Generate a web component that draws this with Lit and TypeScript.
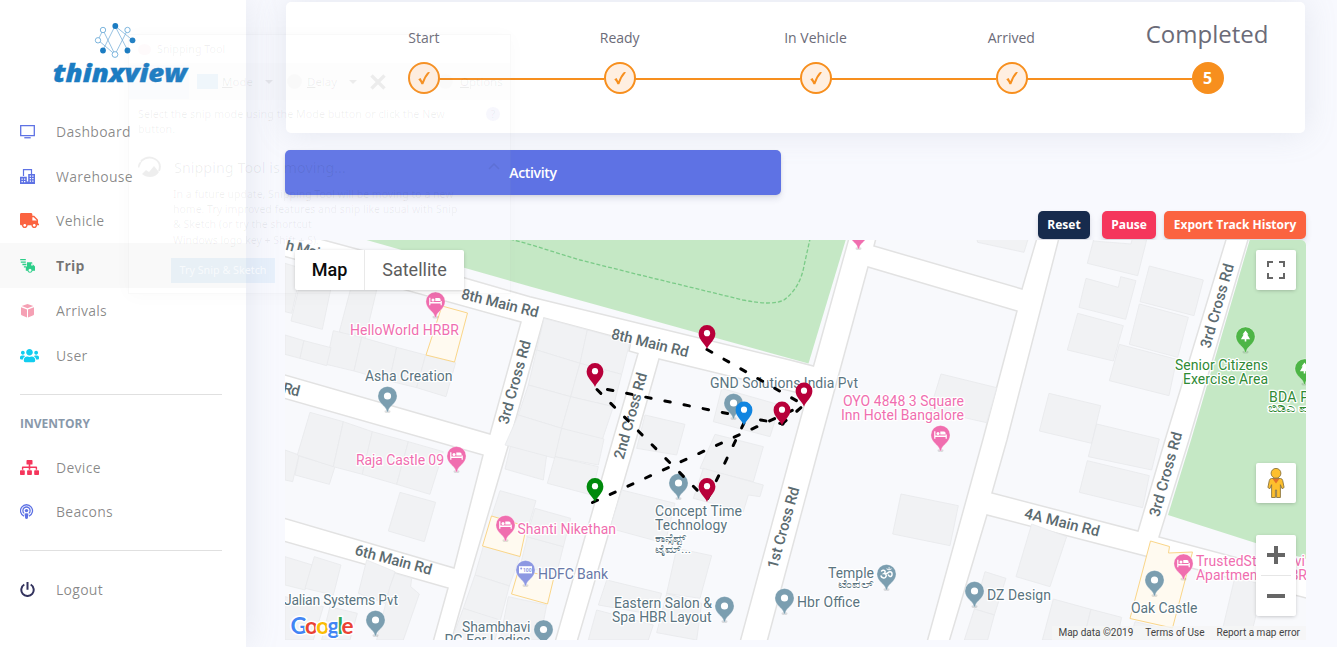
import { LitElement, html, svg, css } from "lit";
import { customElement } from "lit/decorators.js";
import { classMap } from "lit/directives/class-map.js";

const ICONS: Record<string, { w: number; color: string; body: unknown }> = {
  tv: {
    w: 15, color: "#5e72e4",
    body: svg`<path d="M.7 1.7h13.6v10H.7z" fill="none" stroke="currentColor" stroke-width="1.3"/><path d="M4.3 13.1h6.4v1.3H4.3z" fill="currentColor"/>`,
  },
  buildings: {
    w: 15, color: "#5e72e4",
    body: svg`<path d="M3.5 7V.6h8v4.600" fill="none" stroke="currentColor" stroke-width="1.2"/><path fill="currentColor" fill-rule="evenodd" d="M0 7.700h6.8V15H0zM8.200 5h6.800v10H8.200zM1.500 9.500v1.300h1.300V9.500zM4 9.500v1.300h1.300V9.500zM1.500 12v1.300h1.300V12zM4 12v1.300h1.300V12zM9.700 6.500v1.200H11V6.500zM12.200 6.500v1.200h1.300V6.500zM9.700 9v1.200H11V9zM12.200 9v1.200h1.300V9zM9.700 11.600v1.200H11v-1.200zM12.200 11.600v1.200h1.300v-1.200zM6.800 12.500h1.400V15H6.800z"/>`,
  },
  truck: {
    w: 19, color: "#fb6340",
    body: svg`<g transform="scale(.02969)"><path fill="currentColor" d="M624 352h-16V243.900c0-12.700-5.100-24.900-14.100-33.900L494 110.100c-9-9-21.200-14.100-33.900-14.100H416V48c0-26.500-21.500-48-48-48H48C21.500 0 0 21.500 0 48v320c0 26.500 21.500 48 48 48h16c0 53 43 96 96 96s96-43 96-96h128c0 53 43 96 96 96s96-43 96-96h48c8.800 0 16-7.200 16-16v-32c0-8.800-7.200-16-16-16zM160 464c-26.500 0-48-21.500-48-48s21.500-48 48-48 48 21.500 48 48-21.500 48-48 48zm320 0c-26.500 0-48-21.500-48-48s21.500-48 48-48 48 21.500 48 48-21.500 48-48 48zm80-208H416V144h44.100l99.900 99.900V256z"/></g>`,
  },
  delivery: {
    w: 15, color: "#2dce89",
    body: svg`<path d="M.2 1.700h5.600M.8 4.100h5M2.400 6.500h4M3.900 8.900h2.500" stroke="currentColor" stroke-width="1.300"/><path fill="currentColor" fill-rule="evenodd" d="M7 4.200h5.100l.6 2 2.300 2.300v4.300h-2.400a2.700 2.700 0 0 1-5.200 0H5.800V9.500L7 8zm4.400 1.400-.3 2h1.900l-.6-2zM10 10.700a1.500 1.500 0 1 0 0 3 1.500 1.500 0 0 0 0-3z"/>`,
  },
  box: {
    w: 15, color: "#f5a0b4",
    body: svg`<path fill="currentColor" d="M7.500.9 13.300 3 7.500 5.200 1.700 3zM1 4.200l6 2.200v8L1.600 12.200 1 11.500zM14 4.200 8 6.400v8l5.400-2.200.6-.7z"/>`,
  },
  users: {
    w: 19, color: "#11cdef",
    body: svg`<g transform="scale(.02969)"><path fill="currentColor" d="M96 224c35.300 0 64-28.700 64-64s-28.700-64-64-64-64 28.700-64 64 28.700 64 64 64zm448 0c35.300 0 64-28.700 64-64s-28.700-64-64-64-64 28.700-64 64 28.700 64 64 64zm32 32h-64c-17.600 0-33.500 7.100-45.100 18.600 40.300 22.100 68.900 62 75.100 109.400h66c17.700 0 32-14.300 32-32v-32c0-35.300-28.700-64-64-64zm-256 0c61.900 0 112-50.100 112-112S381.900 32 320 32 208 82.100 208 144s50.100 112 112 112zm76.800 32h-8.300c-20.800 10-43.900 16-68.500 16s-47.600-6-68.500-16h-8.300C179.600 288 128 339.600 128 403.200V432c0 26.500 21.500 48 48 48h288c26.500 0 48-21.500 48-48v-28.800c0-63.600-51.600-115.200-115.200-115.200zm-223.700-13.400C161.500 263.100 145.600 256 128 256H64c-35.300 0-64 28.700-64 64v32c0 17.700 14.300 32 32 32h65.900c6.300-47.400 34.900-87.300 75.200-109.400z"/></g>`,
  },
  sitemap: {
    w: 19, color: "#f5365c",
    body: svg`<path fill="currentColor" d="M7.200 0h4.600q.7 0 .7.700v3.200q0 .7-.7.700h-1.500v1.900h6q.8 0 .8.800v2.400h-1.400V8h-5.400v1.700H8.700V8H3.300v1.700H1.900V7.300q0-.8.800-.8h6V4.600H7.200q-.7 0-.7-.7V.7Q6.500 0 7.200 0zM.8 10.200h3.200q.8 0 .8.800v3.200q0 .8-.8.800H.8q-.8 0-.8-.8V11q0-.8.800-.8zM7.900 10.200h3.200q.8 0 .8.800v3.200q0 .8-.8.800H7.900q-.8 0-.8-.8V11q0-.8.800-.8zM15 10.200h3.200q.8 0 .8.800v3.200q0 .8-.8.800H15q-.8 0-.8-.8V11q0-.8.800-.8z"/>`,
  },
  podcast: {
    w: 15, color: "#5e72e4",
    body: svg`<g fill="none" stroke="currentColor" stroke-width="1.300"><path d="M4 12.200A6 6 0 1 1 9 12.200"/><path d="M4 9.200a3.600 3.600 0 1 1 5 0"/></g><circle cx="6.500" cy="6.600" r="1.700" fill="currentColor"/><path fill="currentColor" d="M4.600 9.600q1.900-.9 3.800 0l-.5 4.400q-.2 1-1.400 1t-1.400-1z"/>`,
  },
  power: {
    w: 15, color: "#32325d",
    body: svg`<path d="M4.300 2.500a6.200 6.200 0 1 0 6.400 0M7.500 0v7.700" fill="none" stroke="currentColor" stroke-width="2"/>`,
  },
};

@customElement("nav-item")
class NavItem extends LitElement {
  static properties = { icon: {}, label: {}, active: { type: Boolean } };
  declare icon: string;
  declare label: string;
  declare active: boolean;
  static styles = css`
    .row { display: flex; align-items: center; height: 44.800px; padding-left: 20px; font-size: 14px; letter-spacing: 0.280px; color: rgba(0, 0, 0, 0.470); }
    .active { background: rgba(0, 0, 0, 0.025); font-weight: 700; color: rgba(0, 0, 0, 0.540); }
    .icon { width: 36px; height: 15px; display: block; }
    .icon svg { display: block; height: 15px; }
  `;
  render() {
    const i = ICONS[this.icon];
    return html`<div class=${classMap({ row: true, active: this.active })}>
      <span class="icon"><svg width=${i.w} height="15" viewBox="0 0 ${i.w} 15" color=${i.color}>${i.body}</svg></span>
      <span>${this.label}</span>
    </div>`;
  }
}

@customElement("side-bar")
class SideBar extends LitElement {
  static styles = css`
    :host { display: flex; flex-direction: column; width: 246px; flex: none; height: 647px; background: #fff; box-shadow: 0 0 32px rgba(136, 152, 170, 0.180); }
    .logo { height: 109px; display: block; flex: none; }
    .rule { height: 1px; background: #e0e0e0; margin: 16px 24px 0 20px; }
    .heading { margin: 20px 0 0 20px; height: 18px; line-height: 18px; font-size: 12px; font-weight: 700; color: #8898aa; letter-spacing: 0; }
    .inventory { padding-top: 12px; }
    .account { padding-top: 16px; }
  `;
  render() {
    return html`
      <svg class="logo" width="246" height="109" viewBox="0 0 246 109">
        <g fill="none" stroke="#7db3db" stroke-width=".8">
          <path d="M115 26 103 50M115 26 127.500 50M115 26 132.500 40M103 30 98 40 115 54.500 127.500 30M103 30 115 54.500"/>
        </g>
        <g fill="#fff" stroke="#5ea3d4" stroke-width=".8">
          <circle cx="103" cy="30" r="2.700"/><circle cx="127.500" cy="30" r="2.700"/><circle cx="98" cy="40.300" r="2.700"/><circle cx="115" cy="54.500" r="2.900"/>
        </g>
        <g fill="#1b7cc2"><circle cx="115.300" cy="26" r="2.900"/><circle cx="132.500" cy="40.300" r="2.900"/><circle cx="103" cy="50.500" r="2.900"/><circle cx="127.500" cy="50.500" r="2.900"/></g>
        <text x="53" y="82" fill="#1b7cc2" stroke="#1b7cc2" stroke-width=".35" font-size="25" font-weight="800" font-style="italic" textLength="134" lengthAdjust="spacingAndGlyphs">thinxview</text>
      </svg>
      <nav>
        <nav-item icon="tv" label="Dashboard"></nav-item>
        <nav-item icon="buildings" label="Warehouse"></nav-item>
        <nav-item icon="truck" label="Vehicle"></nav-item>
        <nav-item icon="delivery" label="Trip" active></nav-item>
        <nav-item icon="box" label="Arrivals"></nav-item>
        <nav-item icon="users" label="User"></nav-item>
      </nav>
      <div class="rule"></div>
      <div class="heading">INVENTORY</div>
      <nav class="inventory">
        <nav-item icon="sitemap" label="Device"></nav-item>
        <nav-item icon="podcast" label="Beacons"></nav-item>
      </nav>
      <div class="rule"></div>
      <nav class="account"><nav-item icon="power" label="Logout"></nav-item></nav>
    `;
  }
}

@customElement("trip-steps")
class TripSteps extends LitElement {
  static styles = css`
    :host { display: grid; grid-template-columns: repeat(5, 1fr); height: 131px; margin-top: 2px; padding-left: 40px; box-sizing: border-box; background: #fff; border-radius: 5px; box-shadow: 0 0 32px rgba(136, 152, 170, 0.180); color: #6b6b78; }
    .step { display: grid; grid-template-rows: 60px 32px; grid-template-columns: 1fr 31px 1fr; align-items: center; }
    .label { grid-column: 1 / 4; text-align: center; font-size: 14px; line-height: 20px; padding-top: 12px; }
    .current .label { font-size: 24px; line-height: 30px; padding-top: 4px; white-space: nowrap; }
    .dot { display: grid; place-items: center; box-sizing: border-box; width: 32px; height: 32px; border: 2px solid #f78f1e; border-radius: 50%; background: #ffefe1; color: #f78f1e; grid-column: 2; grid-row: 2; }
    .current .dot { background: #f78f1e; color: #fff; font-weight: 700; font-size: 16px; }
    .line { grid-row: 2; height: 2px; background: #f78f1e; margin-top: 2px; }
    .before { grid-column: 1; }
    .after { grid-column: 3; }
  `;
  render() {
    const names = ["Start", "Ready", "In Vehicle", "Arrived", "Completed"];
    return names.map((n, i) => html`
      <div class=${classMap({ step: true, current: i === 4 })}>
        <span class="label">${n}</span>
        ${i > 0 ? html`<span class="line before"></span>` : ""}
        <span class="dot">${i < 4
          ? html`<svg width="14" height="14" viewBox="0 0 14 14"><path fill="currentColor" d="M1.300 8.200 3.600 7.100 5.300 10.300Q8.100 3.600 11 1l2 .2Q8.800 5.900 6.300 13.200H4.400Q3.200 10.200 1.300 8.200z"/></svg>`
          : "5"}</span>
        ${i < 4 ? html`<span class="line after"></span>` : ""}
      </div>`);
  }
}

const BLOCKS = [
  "316,238 465,278 530,296.7 790,360 813.5,366 849,238",
  "283,256 521,322 490,434 283,374.500",
  "283,398 483,455 454,568 283,518",
  "283,541 448,588 433,642 283,642",
  "544,318 631,341 629,351 638,353.500 613,439 555,642 451,642 460,610 510,440",
  "659,359 807,395 790,457 740,642 577,642 636,440",
  "868,267 1017,311 983,439 927,642 767,642 821,440",
  "876,238 874,246 1022,289 1037,238",
  "1059,238 1226.500,238 1165,440 1138,531 992,493 1007,440",
  "987,515 1145,556 1310,599 1310,642 949,642",
  "1248.500,238 1310,238 1310,577 1159,537 1189,440",
];

// Building outlines, grouped by survey tile: origin x, origin y, outlines in thirds of a pixel.
const BUILDINGS: [number, number, string[]][] = [
  [280, 235, [
    "15,85 65,100 35,235 15,230", "68,110 158,135 127,283 33,258", "215,150 290,165 252,325 178,290",
    "160,287 245,307 222,408 138,388", "245,307 350,337 328,438 222,408", "350,337 437,360 410,458 328,438",
    "437,360 527,383 498,485 410,458", "15,300 72,317 60,370 15,358", "72,317 153,338 140,392 60,370"]],
  [280, 440, [
    "15,30 57,45 38,125 15,120", "57,48 165,80 148,133 45,105", "90,-83 190,-55 160,80 52,45",
    "190,-55 277,-25 247,103 160,80", "277,-25 385,5 350,133 247,103", "385,5 490,35 450,163 350,133",
    "360,157 467,187 433,305 325,273", "15,350 97,375 75,450 15,435", "103,350 183,375 160,465 75,445",
    "260,360 345,395 315,490 235,460", "345,400 395,415 392,440 418,462 370,600 290,600 330,440",
    "15,470 130,500 100,600 15,600", "150,500 232,520 210,600 125,600", "693,12 800,45 790,120 675,87",
    "660,152 768,182 745,260 635,228", "610,318 720,350 688,438 585,405", "585,405 688,438 660,545 550,505",
    "550,505 660,540 645,600 515,600", "742,290 850,320 830,400 720,380", "685,470 800,495 780,600 660,600"]],
  [530, 235, [
    "42,250 172,285 150,385 20,345", "172,285 300,320 275,418 150,385", "20,345 150,385 122,485 -5,450",
    "150,385 275,418 250,515 122,485", "-5,450 122,485 95,580 -35,540", "122,485 250,515 215,620 95,580",
    "-35,540 95,580 75,670 -75,630", "95,580 222,612 205,690 75,665", "345,540 465,568 440,660 320,640",
    "575,460 750,510 720,605 550,560", "555,598 700,635 670,740 510,700"]],
  [530, 440, [
    "75,50 205,80 185,165 52,130", "15,205 122,235 100,320 -10,290", "275,150 435,190 405,310 240,265",
    "520,85 700,135 690,170 655,165 640,215 490,175", "440,325 545,347 510,475 410,460",
    "230,420 395,460 375,525 205,495", "200,510 370,555 355,600 175,600", "410,460 515,490 500,600 380,578"]],
  [780, 235, ["590,10 745,10 732,52 593,22", "483,417 650,458 620,563 450,525"]],
  [1030, 235, [
    "192,10 190,18 303,27 307,10 350,15 323,122 172,85", "168,130 265,157 272,125 318,137 287,253 147,217",
    "143,235 280,272 250,378 112,345", "268,328 440,373 417,482 238,437", "358,93 520,135 492,242 330,200",
    "328,207 475,247 443,367 298,328", "57,475 212,512 185,625 28,588", "200,567 388,612 365,705 175,665"]],
  [780, 440, [
    "363,162 535,197 510,317 338,282", "615,395 678,415 643,525 583,507", "583,507 643,525 623,600 553,600",
    "755,252 860,290 810,440 708,410"]],
  [1030, 440, [
    "172,62 358,107 338,203 148,157", "70,477 183,508 160,600 37,600", "183,508 275,532 260,600 160,600",
    "615,410 700,435 660,600 570,600", "315,545 420,570 410,600 300,600"]],
];

const HIGHLIGHTS = [
  "442,306 467.500,313 454.500,362 426,355",
  "491.500,516 526.500,526.500 520,556.500 482.500,546",
  "518.500,570 554,577 547.500,604 511.500,594",
  "1150.500,541 1169.500,546.500 1168.500,553 1192.500,552 1172.500,628 1130,618.500",
];

const PINK = "#f06eaf";
const SLATE = "#7b9eb0";
const INK = "#5a7480";
const ROAD = "#5c6b70";

// Street names: text, x, y, rotation, drawn length.
const STREETS: [string, number, number, number, number][] = [
  ["h Main Rd", 285, 249.500, 14.500, 62],
  ["8th Main Rd", 460.500, 298.500, 14, 79],
  ["8th Main Rd", 610.500, 338.500, 13.700, 79],
  ["3rd Cross Rd", 508, 425, -74.500, 86],
  ["2nd Cross Rd", 623.500, 460, -74.500, 89],
  ["1st Cross Rd", 777, 569.500, -74.500, 84],
  ["3rd Cross Rd", 1210, 349, -74, 87],
  ["3rd Cross Rd", 1159, 517.500, -74.500, 87],
  ["4A Main Rd", 1023.500, 518, 14, 77],
  ["6th Main Rd", 354, 554.500, 15, 79],
  ["Rd", 282, 392.500, 14, 17],
];

// Place names: text, x, baseline, drawn length, colour, size.
const PLACES: [string, number, number, number, string, number?][] = [
  ["HelloWorld HRBR", 350, 335, 109, PINK],
  ["Asha Creation", 365, 381, 87.500, INK],
  ["Raja Castle 09", 356, 465.300, 88, PINK],
  ["Shanti Nikethan", 517.500, 534, 98.500, PINK],
  ["HDFC Bank", 538, 579, 70, "#6878a8"],
  ["Jalian Systems Pvt", 284, 605, 114, INK],
  ["Shambhavi", 462, 632, 68.500, INK],
  ["PG For Ladies", 444.500, 645, 86, INK],
  ["Concept Time", 655, 516, 87, INK],
  ["Technology", 655, 530, 72, INK],
  ["ಕಾನ್ಸೆಪ್ಟ್", 655, 542, 32, INK, 11],
  ["ಟೈಮ್...", 655, 553, 36, INK, 11],
  ["GND Solutions India Pvt", 710, 388, 148, INK],
  ["OYO 4848 3 Square", 843, 406, 121, PINK],
  ["Inn Hotel Bangalore", 841, 420, 123, PINK],
  ["Temple", 828, 578, 46, INK],
  ["ಟೆಂಪಲ್", 838, 588, 36, INK, 11],
  ["Hbr Office", 797, 607, 63, INK],
  ["DZ Design", 987, 600, 64, INK],
  ["Eastern Salon &", 614, 608, 98, INK],
  ["Spa HBR Layout", 612, 622, 99.500, INK],
  ["Oak Castle", 1131, 613, 66.500, INK],
  ["TrustedStay Servi", 1196, 566, 109, PINK],
  ["Apartments - HBR", 1196, 580, 111, PINK],
  ["Senior Citizens", 1175, 370, 93, "#2f8a35"],
  ["Exercise Area", 1183, 384, 85, "#2f8a35"],
  ["BDA Park", 1269, 402, 60, "#2f8a35"],
  ["ಬಿಡಿಎ ಪಾರ್ಕ್", 1267.500, 412, 66, "#2f8a35", 11],
];

const PINS: [number, number, string, string][] = [
  [435.500, 301.500, PINK, "bed"], [456.500, 456, PINK, "bed"], [505.500, 525, PINK, "bed"],
  [940.500, 435, PINK, "bed"], [1183.500, 563.500, PINK, "bed"], [858.500, 233, PINK, "bed"],
  [525.500, 570, "#8d98e2", "atm"], [387.500, 396, SLATE, "dot"], [375.500, 620, SLATE, "dot"],
  [543.500, 629.500, SLATE, "dot"], [678.500, 483, SLATE, "dot"], [733.500, 403, SLATE, "dot"],
  [886.500, 574, SLATE, "om"], [784.500, 598, SLATE, "dot"], [974.500, 591, SLATE, "dot"],
  [724.500, 606, SLATE, "dot"], [1154.500, 580, SLATE, "dot"], [1245.500, 336.500, "#4db546", "tree"],
  [1304.500, 368.500, "#4db546", "tree"],
];

const TRACK = [
  "M707 349.500 804 405", "M607.500 389.500 750 418 783 424", "M782 424 804 405",
  "M592.500 502.500 804 405", "M597 389.500 707 500", "M744 423 707 500",
];

const STOPS: [number, number, string][] = [
  [707, 333.500, "#b8003a"], [595, 371.500, "#b8003a"], [744, 410, "#1185e0"],
  [782, 410, "#b8003a"], [804, 391, "#b8003a"], [707, 486.500, "#b8003a"], [595, 486.500, "#008a0c"],
];

const glyph = (kind: string) => {
  switch (kind) {
    case "bed": return svg`<path fill="#fff" d="M-6.300-3.800h1.200v4.400h10.200v-2.400q0-1.600-1.600-1.600H-.2V-.4H6.300V3.800H5.100V2H-5.100v1.800h-1.200z"/><circle cx="-2.500" cy="-1.600" r="1.500" fill="#fff"/>`;
    case "tree": return svg`<path fill="#fff" d="M0-6 3-1.900H1.800L4.600 2.700H.8V5H-.8V2.700h-3.800L-1.800-1.900H-3z"/>`;
    case "atm": return svg`<path fill="#fff" d="M-6.500-3.800h13v7.200h-13z"/><text x="-2.500" y="2.400" class="tiny" fill="#8d98e2">100</text><circle cx="-4.300" cy="-1.500" r="1" fill="#8d98e2"/>`;
    case "om": return svg`<g fill="none" stroke="#fff" stroke-width="1.500"><path d="M-5.300-2.500C-3-5.500 .5-2.500-2.500-.4 1-.4 0 4.500-3 3.900-4.500 3.600-5.500 2.500-5.700 1.500M-1-.2C1 .2 2-3.200 4.500-2 6.500-.8 5.500 3 3.500 2.500 2.200 2.200 1.800 1.200 1.600.6"/><path d="M0-5.200Q2.500-3 5-5.200" stroke-width="1"/></g><circle cx="2.600" cy="-6" r=".8" fill="#fff"/>`;
    default: return svg`<circle r="3.600" fill="#fff"/>`;
  }
};

@customElement("trip-map")
class TripMap extends LitElement {
  static styles = css`
    :host { display: block; position: relative; width: 1021px; height: 400px; overflow: hidden; border-radius: 0 5px 0 0; font-family: Roboto, sans-serif; }
    .canvas { display: block; }
    .block { fill: #f8f9fc; stroke: #e2e2e2; stroke-width: 1.500; }
    .building { fill: #f1f2f4; stroke: #e8e9ec; stroke-width: 2.500; }
    .highlight { fill: #fffaf0; stroke: #fad689; stroke-width: 1; }
    .park { fill: #c5e8c5; }
    .trail { fill: none; stroke: #7bcb88; stroke-width: 1.300; stroke-dasharray: 4 2; }
    .track { fill: none; stroke: #000; stroke-width: 3; stroke-linecap: round; stroke-dasharray: 5.500 14; }
    .street { font-size: 15px; font-weight: 500; paint-order: stroke; stroke: #fff; stroke-width: 2px; }
    .place { paint-order: stroke; stroke: #fff; stroke-width: 2.500px; stroke-linejoin: round; }
    .tiny { font-size: 5px; font-weight: 700; }
    .google { font-family: Lato, sans-serif; font-size: 22.500px; font-weight: 700; paint-order: stroke; stroke: #fff; stroke-width: 3px; }
    .control { position: absolute; background: #fff; border-radius: 2px; box-shadow: 0 1px 4px -1px rgba(0, 0, 0, 0.300); }
    .types { left: 10px; top: 10px; display: flex; height: 40px; line-height: 40px; font-size: 18px; color: #565656; }
    .types span { width: 99px; text-align: center; }
    .types .on { width: 69px; border-right: 1px solid #e9e9e9; color: #000; font-weight: 500; }
    .square { right: 10px; width: 40px; height: 40px; display: grid; place-items: center; }
    .full { top: 10px; }
    .pegman { top: 223px; }
    .zoom { top: 295px; right: 10px; width: 40px; height: 81px; }
    .zoom svg, .square svg { display: block; }
    .legal { position: absolute; right: 0; bottom: 0; display: flex; height: 14px; line-height: 14px; font-size: 10px; color: #444; }
    .legal span { padding: 0 6px; background: rgba(245, 245, 245, 0.800); white-space: nowrap; }
  `;
  render() {
    return html`
      <svg class="canvas" width="1021" height="400" viewBox="285 240 1021 400">
        <rect x="285" y="240" width="1021" height="400" fill="#fff"/>
        ${BLOCKS.map((p) => svg`<polygon class="block" points=${p}/>`)}
        ${BUILDINGS.map(([x, y, list]) => svg`<g transform="translate(${x} ${y}) scale(.33333)">${list.map((p) => svg`<polygon class="building" points=${p}/>`)}</g>`)}
        ${HIGHLIGHTS.map((p) => svg`<polygon class="highlight" points=${p}/>`)}
        <polygon class="park" points="363,239 530,286.500 808.500,363.500 846,239"/>
        <polygon class="park" points="1250,239 1306,239 1306,559 1168,515 1191,440"/>
        <path class="trail" d="M510 239 530 244.500 580 260 640 275 743 300Q772 306 784 300 800 288 804 266L810 239"/>
        ${STREETS.map(([t, x, y, r, len]) => svg`<text class="street" fill=${ROAD} transform="translate(${x} ${y}) rotate(${r})" textLength=${len}>${t}</text>`)}
        ${PINS.map(([x, y, color, kind]) => svg`<g transform="translate(${x} ${y})">
          <ellipse cy="15.500" rx="3" ry="1.500" fill="#000" opacity=".12"/>
          <path fill=${color} stroke="#fff" stroke-opacity=".6" stroke-width=".6" d="M0 16Q-.9 16-1 14.500C-1.400 10-9.600 7.500-9.600 0A9.600 9.600 0 0 1 9.600 0C9.600 7.500 1.400 10 1 14.500Q.9 16 0 16z"/>
          ${glyph(kind)}</g>`)}
        ${PLACES.map(([t, x, y, len, color, size]) => svg`<text class="place" x=${x} y=${y} fill=${color} font-size=${size ?? 14} textLength=${len} lengthAdjust=${size ? "spacingAndGlyphs" : "spacing"}>${t}</text>`)}
        ${TRACK.map((d) => svg`<path class="track" d=${d}/>`)}
        ${STOPS.map(([x, y, color]) => svg`<g transform="translate(${x} ${y})">
          <path fill=${color} d="M0 15.500C-2 10-8.400 6.500-8.400 0A8.400 8.400 0 0 1 8.400 0C8.400 6.500 2 10 0 15.500z"/>
          <circle r="3.100" cy="-.3" fill="#fff"/></g>`)}
        <text class="google" x="290.500" y="633.500" textLength="63"><tspan fill="#4285f4">G</tspan><tspan fill="#ea4335">o</tspan><tspan fill="#fbbc05">o</tspan><tspan fill="#4285f4">g</tspan><tspan fill="#34a853">l</tspan><tspan fill="#ea4335">e</tspan></text>
      </svg>
      <div class="control types"><span class="on">Map</span><span>Satellite</span></div>
      <div class="control square full">
        <svg width="18" height="18" viewBox="0 0 18 18"><path fill="none" stroke="#666" stroke-width="2" d="M1 6V1h5M12 1h5v5M17 12v5h-5M6 17H1v-5"/></svg>
      </div>
      <div class="control square pegman">
        <svg width="18" height="30" viewBox="0 0 18 30"><g fill="#fdbf2d" stroke="#8a7440" stroke-width=".9"><path d="M4.500 10.500h9q1.700 0 2.200 2l1.400 7-2 1.200-1.700-4V29.500H9.600V22H8.400v7.500H4.600V16.700l-1.700 4-2-1.200 1.400-7q.5-2 2.200-2z"/><circle cx="9" cy="5.300" r="4.900"/></g><path d="M5.500 10.800h7L9 15.500z" fill="#e1712a"/></svg>
      </div>
      <div class="control zoom">
        <svg width="40" height="81" viewBox="0 0 40 81"><path fill="#666" d="M18 11h4v7h7v4h-7v7h-4v-7h-7v-4h7zM11 59h18v4H11z"/><path fill="#e6e6e6" d="M5 40h30v1H5z"/></svg>
      </div>
      <div class="legal"><span>Map data ©2019</span><span>Terms of Use</span><span>Report a map error</span></div>
    `;
  }
}

@customElement("ghost-window")
class GhostWindow extends LitElement {
  static styles = css`
    :host { display: block; position: absolute; left: 128px; top: 34px; width: 383px; height: 260px; box-sizing: border-box; border: 1px solid rgba(0, 0, 0, 0.022); background: rgba(255, 255, 255, 0.045); box-shadow: 0 2px 18px rgba(0, 0, 0, 0.022); color: rgba(0, 0, 0, 0.065); font-family: "Noto Sans", sans-serif; font-size: 10.750px; line-height: 15px; pointer-events: none; }
    .title { display: flex; align-items: center; gap: 6px; height: 28px; padding-left: 9px; }
    .badge { width: 13px; height: 11px; border-radius: 50%; background: rgba(230, 60, 90, 0.025); }
    .tools { display: flex; align-items: center; height: 37px; font-size: 11.500px; background: rgba(0, 0, 0, 0.006); }
    .new { display: flex; align-items: center; justify-content: flex-end; width: 52px; padding-right: 8px; height: 34px; background: rgba(0, 120, 215, 0.012); color: rgba(0, 0, 0, 0.025); }
    .chip { width: 21px; height: 15px; margin: 0 4px 0 8px; background: rgba(0, 120, 215, 0.055); }
    .arrow { margin-left: 12px; border: 4px solid transparent; border-top-color: rgba(0, 0, 0, 0.065); border-bottom: 0; }
    .clock { width: 15px; height: 15px; margin: 0 5px 0 14px; border-radius: 50%; background: rgba(0, 0, 0, 0.015); }
    .cross { width: 16px; height: 16px; margin: 0 7px 0 13px; }
    .faint { color: rgba(0, 0, 0, 0.025); }
    .gear { width: 15px; height: 15px; margin: 0 7px 0 9px; border-radius: 50%; background: rgba(0, 0, 0, 0.012); }
    .hint { display: flex; justify-content: space-between; padding: 7px 10px 0 9px; height: 38px; white-space: nowrap; }
    .help { width: 14px; height: 14px; border-radius: 50%; text-align: center; background: rgba(60, 80, 200, 0.045); }
    .headline { display: flex; align-items: center; height: 36px; padding: 4px 10px 0 9px; font-size: 14.400px; }
    .headline span { flex: 1; padding-left: 13px; }
    .copy { padding: 2px 0 0 44px; line-height: 15.200px; font-size: 10.500px; white-space: nowrap; }
    .try { margin: 10px 0 0 42px; width: 104px; height: 25px; line-height: 25px; text-align: center; background: rgba(0, 120, 215, 0.065); color: rgba(255, 255, 255, 0.700); }
  `;
  render() {
    return html`
      <div class="title"><span class="badge"></span>Snipping Tool</div>
      <div class="tools">
        <span class="new">New</span><span class="chip"></span><span><u>M</u>ode</span><span class="arrow"></span>
        <span class="clock"></span><span><u>D</u>elay</span><span class="arrow"></span>
        <svg class="cross" viewBox="0 0 16 16"><path d="m1.500 1.500 13 13m0-13-13 13" stroke="currentColor" stroke-width="3.500"/></svg>
        <span class="faint">Cancel</span><span class="gear"></span><span><u>O</u>ptions</span>
      </div>
      <div class="hint"><span>Select the snip mode using the Mode button or click the New<br />button.</span><span class="help">?</span></div>
      <div class="headline">
        <svg width="23" height="22" viewBox="0 0 23 22"><path d="M3 5Q10-1 17 3T21 15" fill="none" stroke="currentColor" stroke-width="2"/><path fill="currentColor" d="M0 11Q0 6 4 5L1 12zM4 18l4-4 3 2 5-6 5 6q-3 5-9 5-5 0-8-3z"/></svg>
        <span>Snipping Tool is moving...</span>
        <svg width="12" height="8" viewBox="0 0 12 8"><path d="m1 6 5-5 5 5" fill="none" stroke="currentColor" stroke-width="1.500"/></svg>
      </div>
      <div class="copy">In a future update, Snipping Tool will be moving to a new<br />home. Try improved features and snip like usual with Snip<br />&amp; Sketch (or try the shortcut<br />Windows logo key + Shift + S).</div>
      <div class="try">Try Snip &amp; Sketch</div>
    `;
  }
}

@customElement("app-root")
class AppRoot extends LitElement {
  static styles = css`
    :host { display: flex; position: relative; width: 1337px; height: 647px; overflow: hidden; background: #f8f9fe; font-family: "Open Sans", sans-serif; }
    main { display: flex; flex-direction: column; width: 1021px; margin-left: 39px; }
    trip-steps { margin: 2px 1px 0 1px; }
    .activity { margin-top: 17px; width: 496px; height: 45px; line-height: 45px; border-radius: 5px; background: #5e72e4; color: #fff; text-align: center; font-size: 14px; font-weight: 600; letter-spacing: -0.350px; box-shadow: 0 4px 6px rgba(50, 50, 93, 0.110), 0 1px 3px rgba(0, 0, 0, 0.080); }
    .actions { display: flex; justify-content: flex-end; margin: 16px 0 1px; height: 28px; }
    .btn { line-height: 28px; padding: 0 9px; border-radius: 5px; color: #fff; font-size: 12px; font-weight: 700; box-sizing: border-box; text-align: center; white-space: nowrap; box-shadow: 0 4px 6px rgba(50, 50, 93, 0.110), 0 1px 3px rgba(0, 0, 0, 0.080); }
    .reset { width: 52px; background: #172b4d; margin-right: 12px; }
    .pause { width: 54px; background: #f5365c; margin-right: 8px; }
    .export { width: 142px; background: #fb6340; }
  `;
  render() {
    return html`
      <side-bar></side-bar>
      <main>
        <trip-steps></trip-steps>
        <div class="activity">Activity</div>
        <div class="actions">
          <span class="btn reset">Reset</span><span class="btn pause">Pause</span><span class="btn export">Export Track History</span>
        </div>
        <trip-map></trip-map>
      </main>
      <ghost-window></ghost-window>
    `;
  }
}
